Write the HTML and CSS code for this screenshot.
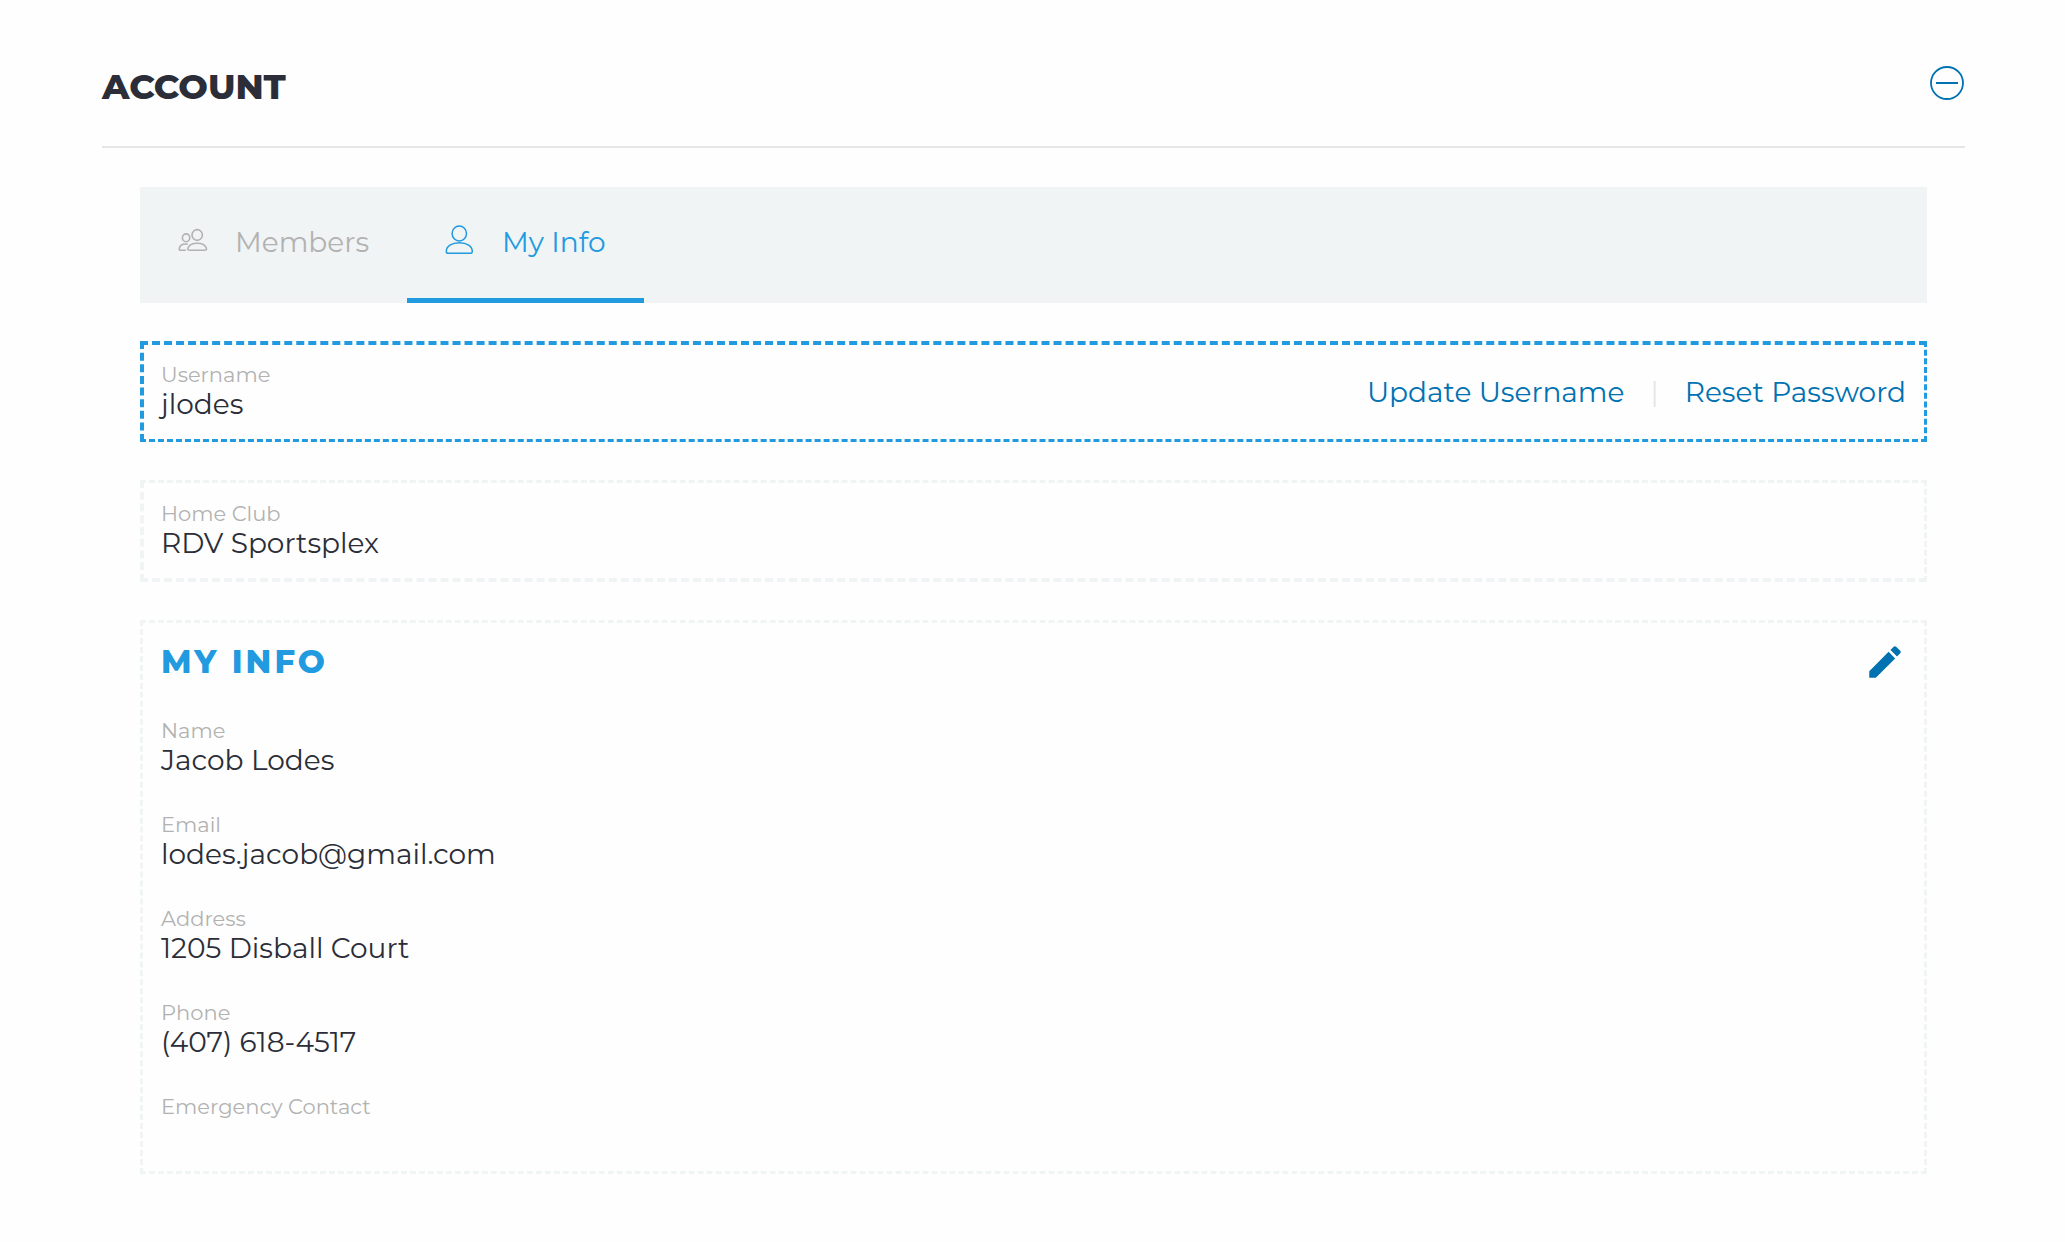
FILE: index.html
```html
<!DOCTYPE html>
<html lang="en">
<head>
    <meta charset="UTF-8">
    <meta name="viewport" content="width=device-width, initial-scale=1.0">
    <title>Account</title>
    <link rel="stylesheet" href="styles.css">
</head>
<body>
    <main class="account">
        <header class="account-header">
            <h1>Account</h1>
            <button type="button" class="icon-btn" aria-label="Collapse account">
                <svg width="35" height="34" viewBox="0 0 35 34" fill="none" stroke="currentColor">
                    <circle cx="17" cy="17" r="16" stroke-width="1.8"/>
                    <path d="M6 17h22" stroke-width="2"/>
                </svg>
            </button>
        </header>

        <div class="account-body">
            <nav class="tabs">
                <a href="#members" class="tab">
                    <svg class="tab-icon" width="30" height="32" viewBox="0 0 30 32" fill="none" stroke="currentColor" stroke-width="1.6">
                        <ellipse cx="19.200" cy="12" rx="5.2" ry="5.4"/>
                        <path d="M11.700 27.200c-1.800 0-2.300-.8-1.600-2.500 1.300-3 4.600-4.500 9.100-4.500s7.800 1.500 9 4.500c.7 1.700.2 2.500-1.500 2.500z"/>
                        <ellipse cx="8.100" cy="14.800" rx="3.700" ry="3.900"/>
                        <path d="M9.800 21.200c-4.500-.6-7.800.9-8.500 4-.4 1.300.1 2 1.300 2H7.800"/>
                    </svg>
                    <span>Members</span>
                </a>
                <a href="#my-info" class="tab active" aria-current="page">
                    <svg class="tab-icon" width="30" height="32" viewBox="0 0 30 32" fill="none" stroke="currentColor" stroke-width="1.5">
                        <ellipse cx="14.300" cy="10.500" rx="7.200" ry="7.500"/>
                        <path d="M3 30.200c-1.200 0-1.700-.4-1.700-1.500 0-5.400 5.200-8.900 13-8.900s13 3.500 13 8.900c0 1.100-.5 1.500-1.700 1.500z"/>
                    </svg>
                    <span>My Info</span>
                </a>
            </nav>

            <section class="card card-active">
                <dl class="field">
                    <dt>Username</dt>
                    <dd>jlodes</dd>
                </dl>
                <div class="card-links">
                    <a href="#update-username">Update Username</a>
                    <span class="divider">|</span>
                    <a href="#reset-password">Reset Password</a>
                </div>
            </section>

            <section class="card card-club">
                <dl class="field">
                    <dt>Home Club</dt>
                    <dd>RDV Sportsplex</dd>
                </dl>
            </section>

            <section class="card card-info" id="my-info">
                <div class="card-header">
                    <h2>My Info</h2>
                    <button type="button" class="icon-btn" aria-label="Edit my info">
                        <svg width="42" height="42" viewBox="0 0 24 24" fill="currentColor">
                            <path d="M3 17.250V21h3.750L17.810 9.940l-3.750-3.750L3 17.250zM20.710 7.040a1 1 0 0 0 0-1.410l-2.340-2.340a1 1 0 0 0-1.410 0l-1.830 1.830 3.750 3.750 1.830-1.830z"/>
                        </svg>
                    </button>
                </div>
                <dl class="field">
                    <dt>Name</dt>
                    <dd>Jacob Lodes</dd>
                </dl>
                <dl class="field">
                    <dt>Email</dt>
                    <dd>lodes.jacob@gmail.com</dd>
                </dl>
                <dl class="field">
                    <dt>Address</dt>
                    <dd>1205 Disball Court</dd>
                </dl>
                <dl class="field">
                    <dt>Phone</dt>
                    <dd>(407) 618-4517</dd>
                </dl>
                <dl class="field">
                    <dt>Emergency Contact</dt>
                    <dd></dd>
                </dl>
            </section>
        </div>
    </main>
</body>
</html>
```
FILE: styles.css
```css
* {
    margin: 0;
    padding: 0;
    box-sizing: border-box;
}

body {
    font-family: 'Montserrat', 'Inter', sans-serif;
    font-size: 28px;
    font-weight: 400;
    line-height: 34px;
    color: #2b2e38;
    background: #fefefe;
}

a {
    color: #0072b1;
    text-decoration: none;
}

.account {
    padding: 64px 100px 64px 102px;
}

.account-header {
    display: flex;
    align-items: flex-start;
    justify-content: space-between;
    height: 84px;
    border-bottom: 2px solid #e6e6e6;
}

h1 {
    font-size: 35px;
    font-weight: 800;
    line-height: 46px;
    text-transform: uppercase;
}

.icon-btn {
    display: flex;
    border: none;
    background: none;
    color: #0072b1;
    cursor: pointer;
}

.account-header .icon-btn {
    margin-top: 2px;
}

.account-body {
    display: flex;
    flex-direction: column;
    gap: 38px;
    padding: 39px 38px 0;
}

.tabs {
    display: flex;
    background: #f0f4f5;
}

.tab {
    display: flex;
    align-items: center;
    gap: 27px;
    height: 116px;
    padding: 0 38px 2px;
    border-bottom: 5px solid transparent;
    color: #b2b2b2;
}

.tab.active {
    color: #219ae0;
    border-color: #219ae0;
}

.tab-icon {
    margin-bottom: 6px;
}

.card {
    display: flex;
    align-items: center;
    justify-content: space-between;
    padding: 17px 18px 17px 17px;
    border: 3px dashed #f0f4f5;
    border-left-width: 4px;
}

.card-active {
    border-color: #219ae0;
    border-top-width: 4px;
}

.card-club {
    padding-top: 18px;
    border-bottom-width: 4px;
}

.card-info {
    display: block;
    border-left-width: 3px;
    padding-left: 18px;
}

.card-header {
    display: flex;
    align-items: center;
    justify-content: space-between;
    height: 44px;
    margin-bottom: 34px;
}

h2 {
    font-size: 32px;
    font-weight: 800;
    letter-spacing: 3px;
    text-transform: uppercase;
    color: #219ae0;
}

.field dt {
    font-size: 21px;
    line-height: 26px;
    color: #b2b2b2;
}

.field dd {
    min-height: 34px;
    line-height: 32px;
    padding-bottom: 2px;
}

.field + .field {
    margin-top: 34px;
}

.card-links {
    display: flex;
    gap: 26px;
}

.divider {
    color: #e6e6e6;
}
```
